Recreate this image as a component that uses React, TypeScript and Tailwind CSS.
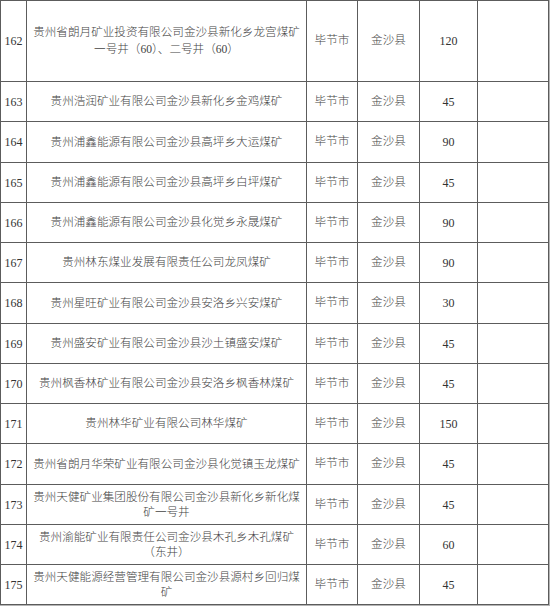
import React from "react";

type Row = { no: string; name: React.ReactNode; v: string; h: string; lead?: string };

const rows: Row[] = [
  { no: "162", name: <>贵州省朗月矿业投资有限公司金沙县新化乡龙宫煤矿<br />一号井（60）、二号井（60）</>, v: "120", h: "h-[81px]", lead: "leading-[17px]" },
  { no: "163", name: "贵州浩润矿业有限公司金沙县新化乡金鸡煤矿", v: "45", h: "h-[40px]" },
  { no: "164", name: "贵州浦鑫能源有限公司金沙县高坪乡大运煤矿", v: "90", h: "h-[41px]" },
  { no: "165", name: "贵州浦鑫能源有限公司金沙县高坪乡白坪煤矿", v: "45", h: "h-[40px]" },
  { no: "166", name: "贵州浦鑫能源有限公司金沙县化觉乡永晟煤矿", v: "90", h: "h-[40px]" },
  { no: "167", name: "贵州林东煤业发展有限责任公司龙凤煤矿", v: "90", h: "h-[40px]" },
  { no: "168", name: "贵州星旺矿业有限公司金沙县安洛乡兴安煤矿", v: "30", h: "h-[41px]" },
  { no: "169", name: "贵州盛安矿业有限公司金沙县沙土镇盛安煤矿", v: "45", h: "h-[40px]" },
  { no: "170", name: "贵州枫香林矿业有限公司金沙县安洛乡枫香林煤矿", v: "45", h: "h-[40px]" },
  { no: "171", name: "贵州林华矿业有限公司林华煤矿", v: "150", h: "h-[40px]" },
  { no: "172", name: "贵州省朗月华荣矿业有限公司金沙县化觉镇玉龙煤矿", v: "45", h: "h-[41px]" },
  { no: "173", name: <>贵州天健矿业集团股份有限公司金沙县新化乡新化煤<br />矿一号井</>, v: "45", h: "h-[40px]", lead: "leading-[15px]" },
  { no: "174", name: <>贵州渝能矿业有限责任公司金沙县木孔乡木孔煤矿<br />（东井）</>, v: "60", h: "h-[40px]", lead: "leading-[15px]" },
  { no: "175", name: <>贵州天健能源经营管理有限公司金沙县源村乡回归煤<br />矿</>, v: "45", h: "h-[40px]", lead: "leading-[15px]" },
];

const cell = "border-r border-b border-[#5c5c5c] flex items-center justify-center text-center";

export default function App() {
  return (
    <div
      className="w-[550px] h-[606px] bg-white text-[#444444] text-[11.6px] font-light overflow-hidden"
      style={{ fontFamily: '"Liberation Serif", "Noto Sans CJK SC", serif' }}
    >
      <div className="w-[550px] border-r border-b border-[#b4b4b4]">
        <div className="w-[549px] border-t border-l border-[#5c5c5c]">
          {rows.map((r) => (
            <div key={r.no} className={`grid grid-cols-[26px_280px_51px_62px_58px_71px] ${r.h}`}>
              <div className={`${cell} text-[#333333] text-[12px]`}>{r.no}</div>
              <div className={`${cell} ${r.lead ?? "leading-[15px]"}`}>
                <span>{r.name}</span>
              </div>
              <div className={cell}>毕节市</div>
              <div className={cell}>金沙县</div>
              <div className={`${cell} text-[#333333] text-[12px]`}>{r.v}</div>
              <div className={cell}></div>
            </div>
          ))}
        </div>
      </div>
    </div>
  );
}
